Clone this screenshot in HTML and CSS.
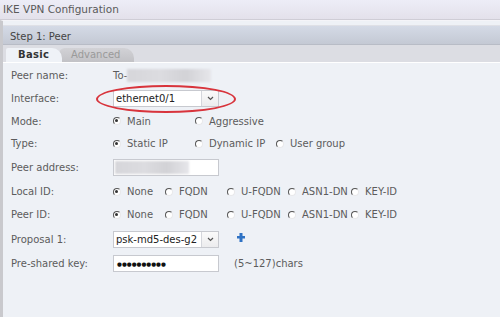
FILE: index.html
```html
<!DOCTYPE html>
<html lang="en">
  <head>
    <meta charset="UTF-8" />
    <title>IKE VPN Configuration</title>
    <link rel="stylesheet" href="styles.css">
  </head>

  <body>
    <div class="title-bar">IKE VPN Configuration</div>

    <div class="panel">
      <div class="step-bar">Step 1: Peer</div>

      <div class="tabs">
        <div class="tab active">Basic</div>
        <div class="tab">Advanced</div>
      </div>

      <div class="form">
        <div class="row">
          <div class="label">Peer name:</div>
          <div class="field">
            <span class="value">To-</span>
            <span class="blur blur-name"></span>
          </div>
        </div>

        <div class="row">
          <div class="label">Interface:</div>
          <div class="field">
            <div class="select">
              <span class="select-text">ethernet0/1</span>
              <span class="select-arrow"><svg width="7" height="5" viewBox="0 0 7 5"><path d="M1 1 L3.5 3.5 L6 1" fill="none" stroke="#555" stroke-width="1.2"/></svg></span>
            </div>
          </div>
          <div class="highlight"></div>
        </div>

        <div class="row short">
          <div class="label">Mode:</div>
          <div class="field">
            <span class="radio-item w82"><span class="radio checked"></span>Main</span>
            <span class="radio-item"><span class="radio"></span>Aggressive</span>
          </div>
        </div>

        <div class="row">
          <div class="label">Type:</div>
          <div class="field">
            <span class="radio-item w82"><span class="radio checked"></span>Static IP</span>
            <span class="radio-item w81"><span class="radio"></span>Dynamic IP</span>
            <span class="radio-item"><span class="radio"></span>User group</span>
          </div>
        </div>

        <div class="row tall">
          <div class="label">Peer address:</div>
          <div class="field">
            <div class="input">
              <span class="blur blur-addr"></span>
            </div>
          </div>
        </div>

        <div class="row">
          <div class="label">Local ID:</div>
          <div class="field">
            <span class="radio-item w52"><span class="radio checked"></span>None</span>
            <span class="radio-item w62"><span class="radio"></span>FQDN</span>
            <span class="radio-item w61"><span class="radio"></span>U-FQDN</span>
            <span class="radio-item w63"><span class="radio"></span>ASN1-DN</span>
            <span class="radio-item"><span class="radio"></span>KEY-ID</span>
          </div>
        </div>

        <div class="row">
          <div class="label">Peer ID:</div>
          <div class="field">
            <span class="radio-item w52"><span class="radio checked"></span>None</span>
            <span class="radio-item w62"><span class="radio"></span>FQDN</span>
            <span class="radio-item w61"><span class="radio"></span>U-FQDN</span>
            <span class="radio-item w63"><span class="radio"></span>ASN1-DN</span>
            <span class="radio-item"><span class="radio"></span>KEY-ID</span>
          </div>
        </div>

        <div class="row taller">
          <div class="label">Proposal 1:</div>
          <div class="field">
            <div class="select">
              <span class="select-text">psk-md5-des-g2</span>
              <span class="select-arrow"><svg width="7" height="5" viewBox="0 0 7 5"><path d="M1 1 L3.5 3.5 L6 1" fill="none" stroke="#555" stroke-width="1.2"/></svg></span>
            </div>
            <svg class="add-icon" width="8" height="9" viewBox="0 0 8 9"><path d="M2.5 0 H5.5 V3 H8 V5.5 H5.5 V9 H2.5 V5.5 H0 V3 H2.5 Z" fill="#2f72c4"/></svg>
          </div>
        </div>

        <div class="row">
          <div class="label">Pre-shared key:</div>
          <div class="field">
            <div class="input">
              <span class="dots">&#9679;&#9679;&#9679;&#9679;&#9679;&#9679;&#9679;&#9679;&#9679;&#9679;</span>
            </div>
            <span class="hint">(5~127)chars</span>
          </div>
        </div>
      </div>
    </div>
  </body>
</html>
```

FILE: styles.css
```css
body {
  margin: 0;
  font-family: "DejaVu Sans", Verdana, sans-serif;
  font-size: 10px;
  color: #5c5c5c;
  background-color: #eef1f6;
  width: 500px;
  height: 317px;
  overflow: hidden;
}

.title-bar {
  height: 19px;
  line-height: 18px;
  padding-left: 3px;
  font-size: 10.5px;
  color: #5a5a5a;
  background: linear-gradient(#ededf7, #e3e1eb);
  border-bottom: 1px solid #cfcdd6;
}

.panel {
  border-left: 3px solid #c9c9cd;
  height: 297px;
  padding-top: 4px;
  background-color: #eef1f6;
  box-sizing: border-box;
  border-top: 1px solid #f4f4f8;
}

.step-bar {
  height: 20px;
  line-height: 21px;
  padding-left: 7px;
  color: #444;
  background: linear-gradient(#d4dae6, #c4c9d4);
  border-top: 1px solid #dfe0e6;
  border-bottom: 1px solid #b8bcc6;
  box-sizing: border-box;
}

.tabs {
  display: flex;
  height: 17px;
  padding-left: 3px;
  background-color: #dcdde3;
  border-bottom: 1px solid #ffffff;
}

.tab {
  height: 14px;
  margin-top: 3px;
  line-height: 14px;
  padding: 0 14px 0 12px;
  color: #9a9a9a;
  background: linear-gradient(#d2d2d6, #c2c2c6);
  border-radius: 6px 10px 0 0;
  margin-left: -3px;
}

.tab.active {
  position: relative;
  z-index: 1;
  margin-left: 0;
  width: 32px;
  padding: 0 12px 0 12px;
  color: #333;
  font-weight: bold;
  background: #eff2f7;
  border-radius: 2px 10px 0 0;
  letter-spacing: 0.3px;
}

.form {
  padding-top: 1px;
}

.row {
  position: relative;
  display: flex;
  align-items: center;
  height: 23px;
}

.row.short {
  height: 22px;
}

.row.tall {
  height: 25px;
}

.row.taller {
  height: 26px;
}

.label {
  width: 102px;
  padding-left: 8px;
  flex-shrink: 0;
}

.field {
  display: flex;
  align-items: center;
  flex: 1;
}

.blur {
  display: inline-block;
  background: linear-gradient(90deg, #d6d6da, #dcdce0 40%, #d2d2d6 70%, #e6e6ea);
  filter: blur(1px);
}

.blur-name {
  width: 84px;
  height: 13px;
}

.select {
  display: flex;
  width: 104px;
  height: 15px;
  border: 1px solid #c7c9cf;
  background-color: #fff;
}

.select-text {
  flex: 1;
  padding-left: 2px;
  line-height: 15px;
  color: #222;
}

.select-arrow {
  width: 16px;
  display: flex;
  align-items: center;
  justify-content: center;
  border-left: 1px solid #d4d6dc;
  background: linear-gradient(#fafafa, #ececee);
}

.input {
  display: flex;
  align-items: center;
  width: 104px;
  height: 15px;
  border: 1px solid #c7c9cf;
  background-color: #fff;
}

.blur-addr {
  width: 74px;
  height: 13px;
  margin-left: 1px;
}

.dots {
  padding-left: 3px;
  font-size: 5.6px;
  color: #111;
}

.hint {
  margin-left: 15px;
}

.add-icon {
  margin-left: 18px;
  margin-top: -3px;
}

.radio-item {
  display: inline-flex;
  align-items: center;
}

.w52 { width: 52px; }
.w61 { width: 61px; }
.w62 { width: 62px; }
.w63 { width: 63px; }
.w81 { width: 81px; }
.w82 { width: 82px; }

.radio {
  position: relative;
  width: 6px;
  height: 6px;
  margin-right: 6px;
  border: 1px solid;
  border-color: #555 #e8e8ea #e8e8ea #555;
  border-radius: 50%;
  background-color: #fff;
}

.radio.checked::after {
  content: "";
  position: absolute;
  left: 1px;
  top: 1px;
  width: 3px;
  height: 3px;
  border-radius: 50%;
  background-color: #333;
}

.highlight {
  position: absolute;
  left: 93px;
  top: -2px;
  width: 136px;
  height: 24px;
  border: 2px solid #d8343c;
  border-radius: 50%;
}
```
